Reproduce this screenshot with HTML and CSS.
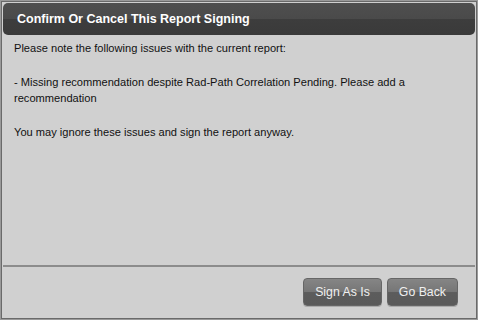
FILE: index.html
```html
<!DOCTYPE html>
<html lang="en">
<head>
    <meta charset="UTF-8">
    <title>Confirm Or Cancel This Report Signing</title>
    <link rel="stylesheet" href="styles.css">
</head>
<body>
    <div class="dialog">
        <div class="dialog-title">Confirm Or Cancel This Report Signing</div>
        <div class="dialog-body">
            <p>Please note the following issues with the current report:</p>
            <p>- Missing recommendation despite Rad-Path Correlation Pending. Please add a recommendation</p>
            <p>You may ignore these issues and sign the report anyway.</p>
        </div>
        <div class="dialog-buttons">
            <button type="button">Sign As Is</button>
            <button type="button">Go Back</button>
        </div>
    </div>
</body>
</html>
```

FILE: styles.css
```css
html, body { margin: 0; height: 100%; }
body { font-family: "Liberation Sans", Arial, sans-serif; background: #d0d0d0; }
.dialog { box-sizing: border-box; height: 320px; width: 478px; border: 2px solid #6a6a6a; outline: 1px solid #9a9a9a; outline-offset: -1px; padding: 1px; display: flex; flex-direction: column; background: #d0d0d0; }
.dialog-title { height: 32px; line-height: 32px; padding-left: 14px; color: #fff; font-weight: bold; font-size: 12.5px; border-radius: 5px; background: linear-gradient(#4f4f4f 0%, #4a4a4a 50%, #3d3d3d 51%, #3a3a3a 100%); }
.dialog-body { flex: 1; padding: 5px 10px 0 11px; font-size: 11.1px; line-height: 16.5px; color: #111; }
.dialog-body p { margin: 0 0 17px; }
.dialog-buttons { border-top: 2px solid #8c8c8c; height: 50px; display: flex; justify-content: flex-end; align-items: center; gap: 5px; padding-right: 17px; }
button { height: 28px; padding: 0 11px; border: 1px solid #666; border-radius: 4px; font-family: inherit; font-size: 12.3px; color: #f0f0f0; background: linear-gradient(#858585 0%, #767676 50%, #5c5c5c 52%, #5a5a5a 100%); box-shadow: 0 1px 0 #aaa; }
```
